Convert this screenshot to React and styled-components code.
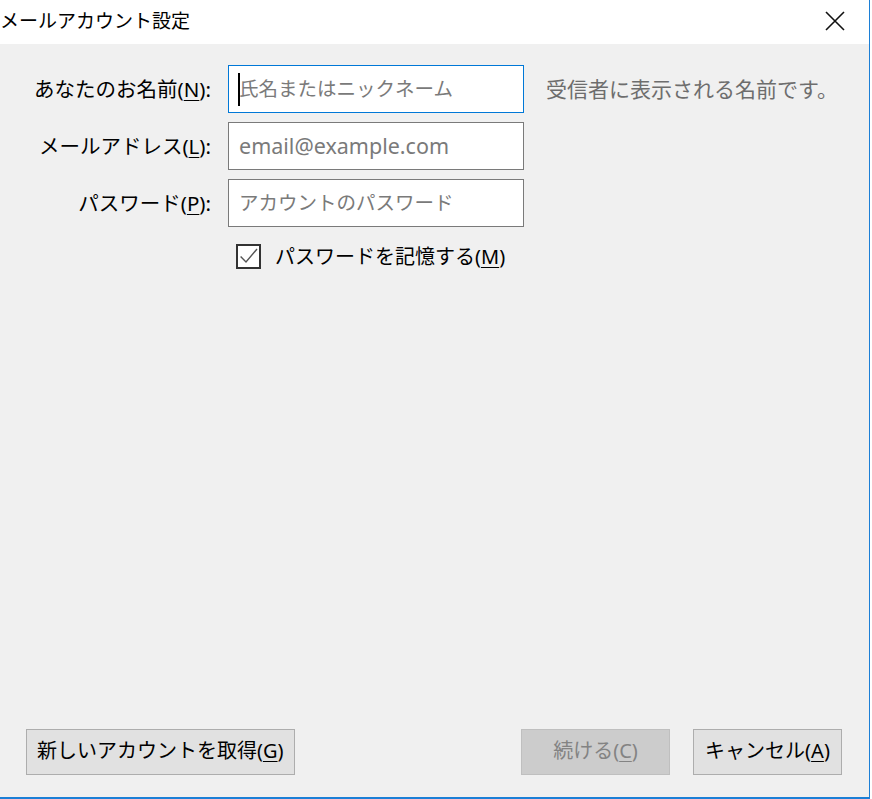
import React from "react";
import styled, { createGlobalStyle } from "styled-components";

const Global = createGlobalStyle`
  html, body { margin: 0; padding: 0; background: #ffffff; }
  body { font-family: "Noto Sans", "Noto Sans CJK JP", sans-serif; }
  * { box-sizing: border-box; }
`;

const FONT = `"Noto Sans", "Noto Sans CJK JP", sans-serif`;

const Window = styled.div`
  width: 870px;
  height: 799px;
  display: flex;
  flex-direction: column;
  border-right: 1px solid #1c7fd6;
  border-bottom: 2px solid #1c7fd6;
  background: #f0f0f0;
  font-family: ${FONT};
`;

const TitleBar = styled.div`
  height: 44px;
  flex: none;
  background: #ffffff;
  display: flex;
  align-items: center;
  justify-content: space-between;
  padding: 0 22px 0 0;
`;

const Title = styled.div`
  font-size: 19px;
  color: #000;
  line-height: 1;
  margin-top: -1px;
`;

const CloseButton = styled.div`
  width: 24px;
  height: 24px;
  display: flex;
  align-items: center;
  justify-content: center;
  margin-top: -2px;
`;

const Body = styled.div`
  flex: 1;
  display: flex;
  flex-direction: column;
  padding: 21px 0 0 0;
`;

const Form = styled.div`
  display: grid;
  grid-template-columns: 211px 296px auto;
  column-gap: 17px;
  row-gap: 9px;
  align-items: center;
`;

const Label = styled.label`
  font-size: 20.5px;
  color: #000;
  text-align: right;
  line-height: 1;
  white-space: nowrap;
`;

const Key = styled.span`
  text-decoration: underline;
  text-underline-offset: 3px;
  text-decoration-thickness: 1px;
`;

const FieldWrap = styled.div`
  position: relative;
  height: 48px;
`;

const Field = styled.input`
  width: 100%;
  height: 100%;
  border: 1px solid ${(p) => (p.$focused ? "#0078d7" : "#7a7a7a")};
  background: #ffffff;
  outline: none;
  font-family: ${FONT};
  font-size: ${(p) => (p.$latin ? "21.5px" : "19.5px")};
  padding: 0 10px 2px 10px;
  color: #000;
  &::placeholder {
    color: #7a7a7a;
  }
`;

const Caret = styled.span`
  position: absolute;
  left: 10px;
  top: 8px;
  width: 2px;
  height: 33px;
  background: #000;
`;

const Hint = styled.div`
  font-size: 21px;
  color: #6d6d6d;
  padding-left: 5px;
  white-space: nowrap;
  line-height: 1;
`;

const CheckRow = styled.div`
  display: flex;
  align-items: center;
  gap: 14px;
  margin: 17px 0 0 236px;
`;

const Box = styled.div`
  width: 25px;
  height: 25px;
  border: 2px solid #333333;
  background: #ffffff;
  display: flex;
  align-items: center;
  justify-content: center;
`;

const CheckLabel = styled.span`
  font-size: 20px;
  color: #000;
  line-height: 1;
`;

const Footer = styled.div`
  margin-top: auto;
  display: flex;
  align-items: center;
  padding: 0 27px 22px 26px;
  gap: 23px;
`;

const Spacer = styled.div`
  flex: 1;
`;

const Button = styled.button`
  height: 46px;
  min-width: ${(p) => (p.$wide ? "auto" : "149px")};
  padding: 0 10px 2px;
  border: 1px solid ${(p) => (p.disabled ? "#bfbfbf" : "#adadad")};
  background: ${(p) => (p.disabled ? "#cccccc" : "#e1e1e1")};
  color: ${(p) => (p.disabled ? "#838383" : "#000")};
  font-family: ${FONT};
  font-size: 20px;
  line-height: 1;
  white-space: nowrap;
  cursor: default;
`;

export default function App() {
  return (
    <>
      <Global />
      <Window>
        <TitleBar>
          <Title>メールアカウント設定</Title>
          <CloseButton>
            <svg width="20" height="20" viewBox="0 0 20 20">
              <path d="M1 1 L19 19 M19 1 L1 19" stroke="#111" strokeWidth="1.6" fill="none" />
            </svg>
          </CloseButton>
        </TitleBar>
        <Body>
          <Form>
            <Label>
              あなたのお名前(<Key>N</Key>):
            </Label>
            <FieldWrap>
              <Field $focused placeholder="氏名またはニックネーム" />
              <Caret />
            </FieldWrap>
            <Hint>受信者に表示される名前です。</Hint>

            <Label>
              メールアドレス(<Key>L</Key>):
            </Label>
            <FieldWrap>
              <Field $latin placeholder="email@example.com" />
            </FieldWrap>
            <span />

            <Label>
              パスワード(<Key>P</Key>):
            </Label>
            <FieldWrap>
              <Field type="password" placeholder="アカウントのパスワード" />
            </FieldWrap>
            <span />
          </Form>
          <CheckRow>
            <Box>
              <svg width="21" height="21" viewBox="0 0 21 21">
                <path d="M2.6 10.5 L8 16 L19 3" stroke="#555" strokeWidth="1.4" fill="none" />
              </svg>
            </Box>
            <CheckLabel>
              パスワードを記憶する(<Key>M</Key>)
            </CheckLabel>
          </CheckRow>
          <Footer>
            <Button $wide>
              新しいアカウントを取得(<Key>G</Key>)
            </Button>
            <Spacer />
            <Button disabled>
              続ける(<Key>C</Key>)
            </Button>
            <Button>
              キャンセル(<Key>A</Key>)
            </Button>
          </Footer>
        </Body>
      </Window>
    </>
  );
}
